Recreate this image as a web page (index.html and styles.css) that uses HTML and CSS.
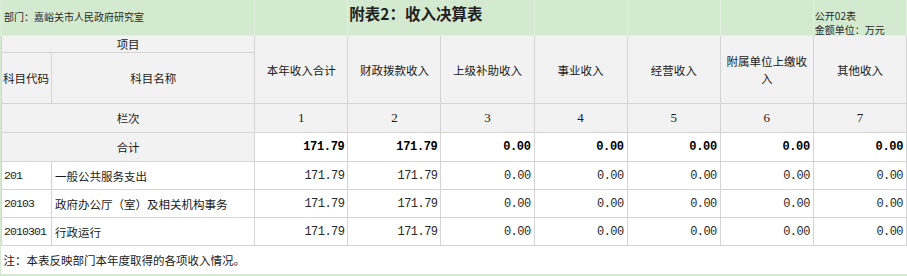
FILE: index.html
```html
<!DOCTYPE html>
<html lang="zh">
<head>
<meta charset="utf-8">
<title>附表2：收入决算表</title>
<link rel="stylesheet" href="styles.css">
</head>
<body>
<div class="page">
<table class="sheet">
  <colgroup>
    <col class="c-code"><col class="c-name"><col class="c-n"><col class="c-n"><col class="c-n"><col class="c-n"><col class="c-n"><col class="c-n"><col class="c-n">
  </colgroup>
  <tr class="r-top">
    <td colspan="2"><div class="top-box dept">部门：嘉峪关市人民政府研究室</div></td>
    <td><div class="top-box"></div></td>
    <td colspan="2"><div class="top-box title">附表2：收入决算表</div></td>
    <td><div class="top-box"></div></td>
    <td><div class="top-box"></div></td>
    <td><div class="top-box"></div></td>
    <td><div class="top-box meta"><span>公开02表</span><span>金额单位：万元</span></div></td>
  </tr>
  <tr class="r-h1 hd">
    <td colspan="2" class="ctr">项目</td>
    <td rowspan="2" class="ctr">本年收入合计</td>
    <td rowspan="2" class="ctr">财政拨款收入</td>
    <td rowspan="2" class="ctr">上级补助收入</td>
    <td rowspan="2" class="ctr">事业收入</td>
    <td rowspan="2" class="ctr">经营收入</td>
    <td rowspan="2" class="ctr wrap">附属单位上缴收入</td>
    <td rowspan="2" class="ctr">其他收入</td>
  </tr>
  <tr class="r-h2 hd">
    <td class="lft">科目代码</td>
    <td class="ctr">科目名称</td>
  </tr>
  <tr class="r-idx hd">
    <td colspan="2" class="ctr">栏次</td>
    <td class="ctr idx">1</td>
    <td class="ctr idx">2</td>
    <td class="ctr idx">3</td>
    <td class="ctr idx">4</td>
    <td class="ctr idx">5</td>
    <td class="ctr idx">6</td>
    <td class="ctr idx">7</td>
  </tr>
  <tr class="r-sum">
    <td colspan="2" class="ctr gray">合计</td>
    <td class="num b">171.79</td>
    <td class="num b">171.79</td>
    <td class="num b">0.00</td>
    <td class="num b">0.00</td>
    <td class="num b">0.00</td>
    <td class="num b">0.00</td>
    <td class="num b">0.00</td>
  </tr>
  <tr class="r-data">
    <td class="code">201</td>
    <td class="name">一般公共服务支出</td>
    <td class="num">171.79</td>
    <td class="num">171.79</td>
    <td class="num">0.00</td>
    <td class="num">0.00</td>
    <td class="num">0.00</td>
    <td class="num">0.00</td>
    <td class="num">0.00</td>
  </tr>
  <tr class="r-data">
    <td class="code">20103</td>
    <td class="name">政府办公厅（室）及相关机构事务</td>
    <td class="num">171.79</td>
    <td class="num">171.79</td>
    <td class="num">0.00</td>
    <td class="num">0.00</td>
    <td class="num">0.00</td>
    <td class="num">0.00</td>
    <td class="num">0.00</td>
  </tr>
  <tr class="r-data">
    <td class="code">2010301</td>
    <td class="name">行政运行</td>
    <td class="num">171.79</td>
    <td class="num">171.79</td>
    <td class="num">0.00</td>
    <td class="num">0.00</td>
    <td class="num">0.00</td>
    <td class="num">0.00</td>
    <td class="num">0.00</td>
  </tr>
  <tr class="r-note">
    <td colspan="9" class="note">注：本表反映部门本年度取得的各项收入情况。</td>
  </tr>
</table>
<div class="bottom-strip"></div>
</div>
</body>
</html>
```
FILE: styles.css
```css
html, body {
  margin: 0;
  padding: 0;
  background: #ffffff;
}

.page {
  width: 907px;
  height: 276px;
  overflow: hidden;
  font-family: "Noto Sans CJK SC", "Noto Sans", sans-serif;
  color: #1a1a1a;
  border-left: 1px solid #d6ead2;
  box-sizing: border-box;
}

.sheet {
  border-collapse: collapse;
  table-layout: fixed;
  width: 906px;
}

.c-code { width: 50px; }
.c-name { width: 203px; }
.c-n { width: 93px; }

.sheet td {
  border: 1px solid #d4d4d4;
  padding: 0 3px;
  font-size: 11.5px;
  line-height: 16px;
  white-space: nowrap;
  overflow: visible;
}

.r-top td {
  background: #d3ead0;
  border-color: #e2f0df;
  border-top: none;
  padding: 0;
  vertical-align: top;
}

.top-box {
  height: 35px;
  overflow: visible;
  box-sizing: border-box;
}

.top-box.dept {
  font-size: 10px;
  line-height: 12px;
  padding: 11px 0 0 2px;
  color: #2a2a2a;
}

.top-box.title {
  font-size: 15.5px;
  line-height: 18px;
  font-weight: 700;
  color: #222;
  padding: 4px 0 0 1px;
}

.top-box.meta {
  display: flex;
  flex-direction: column;
  font-size: 10px;
  line-height: 14px;
  padding: 9px 0 0 1px;
  color: #2a2a2a;
}

.hd td {
  background: #f2f2f2;
}

.r-h1 td.ctr:first-child {
  height: 16px;
}

.r-h2 td {
  height: 50px;
}

.r-idx td {
  height: 28px;
}

.ctr { text-align: center; }
.lft { text-align: left; padding-left: 1px !important; }

.wrap {
  white-space: normal !important;
  line-height: 17px !important;
  padding: 0 5px !important;
}

.idx {
  font-family: "Liberation Serif", serif;
  font-size: 13px !important;
}

.gray {
  background: #f2f2f2;
}

.r-sum td {
  height: 28px;
  vertical-align: middle;
}

.r-data td {
  height: 27px;
  vertical-align: middle;
}

.num {
  text-align: right;
  font-family: "Liberation Mono", "DejaVu Sans Mono", monospace;
  font-size: 12px !important;
  letter-spacing: -0.55px;
  padding-right: 3px !important;
  color: #2a2a2a;
}

.num.b {
  font-weight: 700;
  letter-spacing: -0.35px;
  color: #000;
}

.code {
  font-family: "Liberation Mono", "DejaVu Sans Mono", monospace;
  font-size: 11.5px !important;
  letter-spacing: -0.9px;
  padding-left: 2px !important;
}

.name {
  padding-left: 3px !important;
}

.r-note td {
  border: none;
  height: 28px;
  font-size: 11.5px;
  padding-left: 2px;
  vertical-align: middle;
}

.bottom-strip {
  height: 3px;
  background: #d3ead0;
}
```
